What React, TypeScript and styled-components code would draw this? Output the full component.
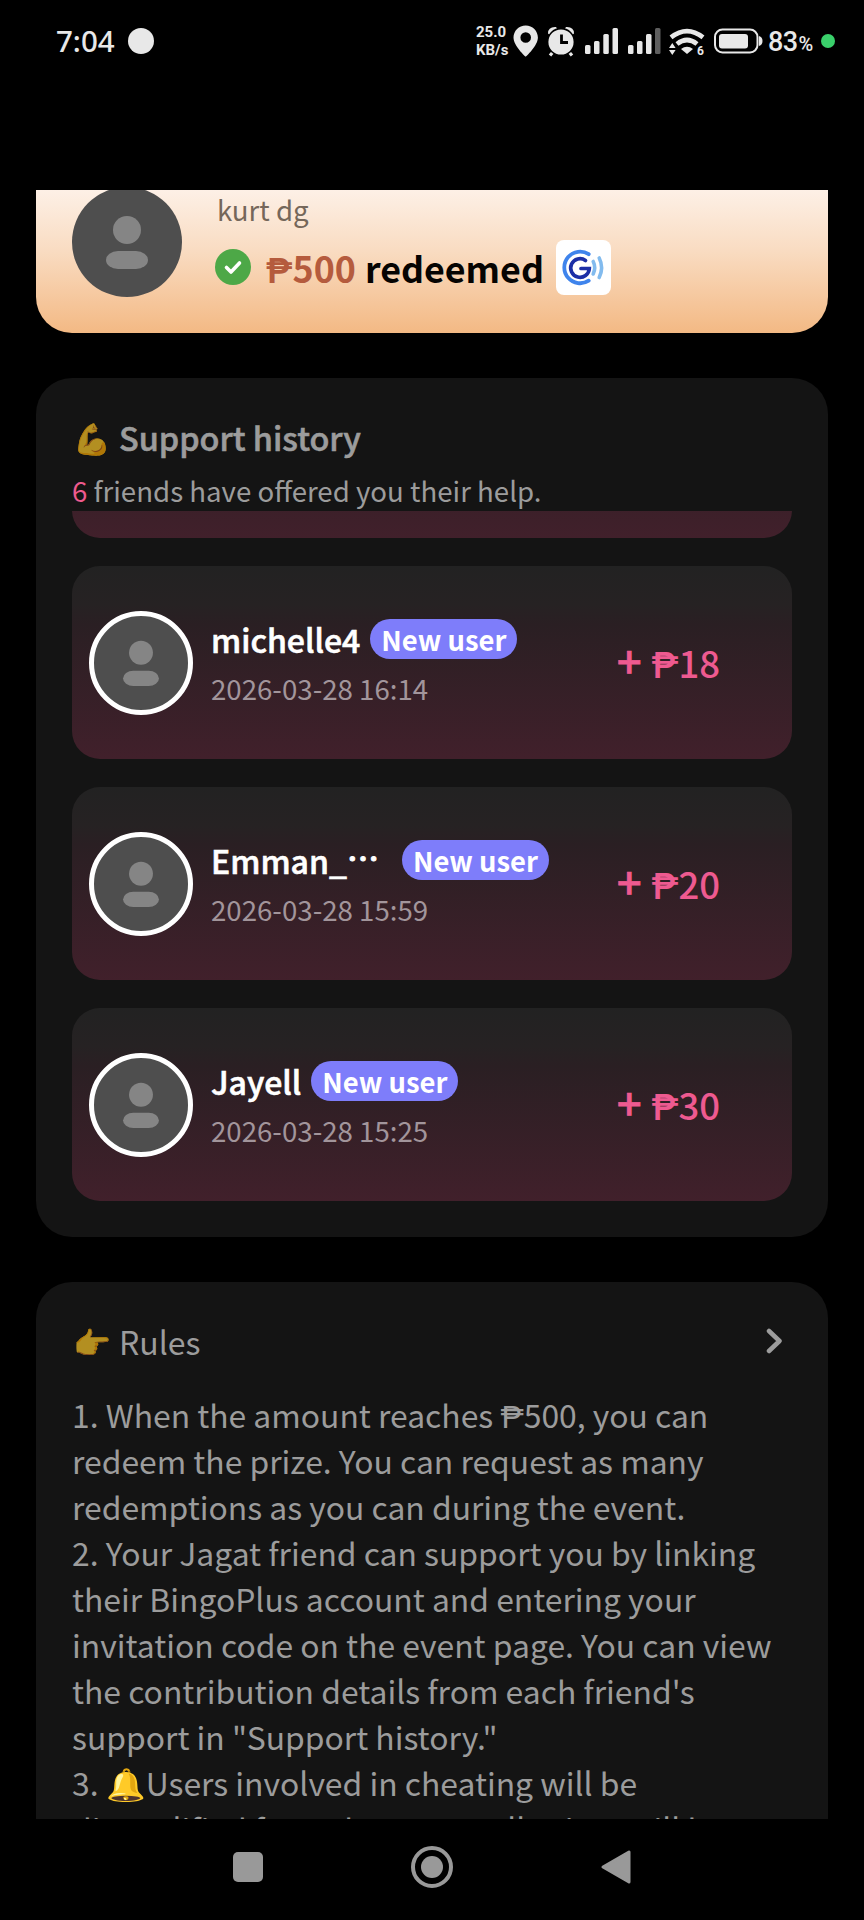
import React from "react";
import styled, { createGlobalStyle } from "styled-components";

const GlobalStyle = createGlobalStyle`
  * { box-sizing: border-box; }
  body { margin: 0; background: #000; }
`;

const Screen = styled.div`
  width: 864px;
  height: 1920px;
  display: flex;
  flex-direction: column;
  overflow: hidden;
  background: #000;
  font-family: "Noto Sans CJK SC", "Noto Sans", sans-serif;
`;

const StatusBar = styled.header`
  flex: none;
  height: 190px;
  padding: 0 29px 0 56px;
  display: flex;
  align-items: flex-start;
  justify-content: space-between;
  color: #e8e8e8;
`;

const StatusLeft = styled.div`
  height: 82px;
  display: flex;
  align-items: center;
  gap: 13px;
`;

const Clock = styled.span`
  font: 500 29.5px/40px "Noto Sans", sans-serif;
`;

const Dot = styled.span<{ $size: number; $color: string }>`
  width: ${(p) => p.$size}px;
  height: ${(p) => p.$size}px;
  border-radius: 50%;
  background: ${(p) => p.$color};
`;

const StatusRight = styled.div`
  height: 82px;
  display: flex;
  align-items: center;
`;

const NetSpeed = styled.div`
  width: 37px;
  margin-top: -1px;
  font: 700 15px/18px Roboto, sans-serif;
`;

const StatusIcons = styled.svg`
  display: block;
  width: 256px;
  height: 40px;
`;

const Battery = styled.div`
  width: 52px;
  margin-top: 3px;
  margin-left: -1px;
  margin-right: 1px;
  display: flex;
  align-items: baseline;
  gap: 1px;
  font: 500 27px/40px Roboto, sans-serif;
  letter-spacing: -0.6px;
  small {
    font-size: 20px;
  }
`;

const Viewport = styled.main`
  flex: none;
  height: 1629px;
  padding: 0 36px;
  overflow: hidden;
`;

const RedeemCard = styled.section`
  height: 143px;
  padding-left: 36px;
  display: flex;
  align-items: flex-start;
  overflow: hidden;
  border-radius: 0 0 36px 36px;
  background: linear-gradient(#fdf0e6, #f9dcc2 42%, #f3b984);
`;

const AvatarRing = styled.span<{ $size: number; $ring?: number; $lift?: number }>`
  flex: none;
  width: ${(p) => p.$size}px;
  height: ${(p) => p.$size}px;
  margin-top: ${(p) => p.$lift ?? 0}px;
  border: ${(p) => p.$ring ?? 0}px solid #fff;
  border-radius: 50%;
  background: #4e4e4e;
  display: flex;
  svg {
    width: 100%;
    height: 100%;
  }
`;

const RedeemBody = styled.div`
  margin-left: 33px;
  display: flex;
  flex-direction: column;
`;

const RedeemName = styled.div`
  margin-top: -1px;
  padding-left: 2px;
  font-size: 27.65px;
  line-height: 40px;
  color: #75675a;
`;

const RedeemLine = styled.div`
  height: 56px;
  margin-top: 10px;
  display: flex;
  align-items: center;
  font-size: 35.8px;
  font-weight: 700;
  line-height: 56px;
  color: #060402;
`;

const RedeemAmount = styled.span`
  margin: 0 9px 0 15px;
  color: #b55b3d;
`;

const PesoSign = styled.span<{ $weight?: number }>`
  font-family: Roboto, sans-serif;
  font-weight: ${(p) => p.$weight ?? 400};
  line-height: 1;
`;

const GcashTile = styled.span`
  width: 55px;
  height: 55px;
  margin-left: 12px;
  border-radius: 8px;
  background: #fff;
  display: flex;
`;

const Panel = styled.section<{ $height: number }>`
  height: ${(p) => p.$height}px;
  margin-top: 45px;
  padding: 0 36px;
  border-radius: 36px;
  background: #141414;
  color: #9c9c9c;
`;

const PanelTitle = styled.h2<{ $strong?: boolean; $top: number }>`
  margin: 0;
  padding-top: ${(p) => p.$top}px;
  display: flex;
  align-items: center;
  font-size: ${(p) => (p.$strong ? 32.4 : 32)}px;
  line-height: 46px;
  font-weight: ${(p) => (p.$strong ? 500 : 400)};
  -webkit-text-stroke: ${(p) => (p.$strong ? 0.6 : 0)}px currentColor;
`;

const Emoji = styled.span`
  width: 46px;
  margin-left: 1px;
  font-size: 30.5px;
  opacity: 0.68;
  -webkit-text-stroke: 0;
`;

const Chevron = styled.svg`
  width: 17px;
  height: 26px;
  margin-left: auto;
  margin-right: 9px;
`;

const Summary = styled.p`
  margin: 0;
  padding-top: 7px;
  font-size: 27.65px;
  line-height: 46px;
  b {
    font-weight: 400;
    color: #ee5a8e;
  }
`;

const HistoryList = styled.div`
  margin-top: -2px;
  height: 690px;
  display: flex;
  flex-direction: column;
  justify-content: flex-end;
  gap: 28px;
  overflow: hidden;
`;

const HistoryRow = styled.article`
  flex: none;
  height: 193px;
  padding: 0 72px 0 17px;
  display: flex;
  align-items: center;
  border-radius: 28px;
  background: linear-gradient(#222222, #262223 20%, #2a1f23 30%, #41202b);
`;

const Person = styled.div`
  margin-left: 18px;
  display: flex;
  flex-direction: column;
`;

const NameLine = styled.div`
  height: 46px;
  margin-top: -1px;
  display: flex;
  align-items: center;
  gap: 10px;
`;

const Name = styled.span`
  display: flex;
  font-size: 32px;
  font-weight: 500;
  line-height: 46px;
  color: #fff;
  -webkit-text-stroke: 0.6px #fff;
`;

const Ellipsis = styled.span`
  width: 32px;
  margin-right: 13px;
  font-size: 32px;
  line-height: 40px;
  text-align: center;
  -webkit-text-stroke: 1px #fff;
`;

const Tag = styled.span`
  width: 147px;
  height: 40px;
  border-radius: 20px;
  background: #7e7dfa;
  color: #fff;
  font-size: 27.4px;
  font-weight: 700;
  line-height: 40px;
  text-align: center;
`;

const Time = styled.time`
  font-size: 27.65px;
  line-height: 42px;
  margin-top: 5px;
  color: #a2959b;
`;

const Amount = styled.span`
  margin-left: auto;
  display: flex;
  align-items: center;
  gap: 10px;
  font-size: 36.5px;
  font-weight: 500;
  line-height: 50px;
  color: #ee5a90;
`;

const Plus = styled.span`
  font-size: 43px;
  line-height: 50px;
  margin-top: -8px;
  -webkit-text-stroke: 0.8px currentColor;
`;

const RulesText = styled.ol`
  margin: 0;
  padding: 27px 0 0;
  list-style: none;
  font-size: 31.87px;
  line-height: 46px;
  white-space: nowrap;
`;

const NavBar = styled.nav`
  flex: none;
  height: 101px;
  display: flex;
  justify-content: center;
  gap: 143px;
  svg {
    width: 42px;
    height: 42px;
    margin-top: 27px;
  }
`;

function Avatar(props: { size: number; ring?: number; lift?: number }) {
  return (
    <AvatarRing $size={props.size} $ring={props.ring} $lift={props.lift}>
      <svg viewBox="0 0 110 110">
        <circle cx="55" cy="43" r="14" fill="#858585" />
        <rect x="34" y="64" width="42" height="18" rx="12" ry="9" fill="#858585" />
      </svg>
    </AvatarRing>
  );
}

function StatusGlyphs() {
  return (
    <StatusIcons viewBox="513 21 256 40" fill="#e8e8e8">
      <path fillRule="evenodd" d="M525.7 25.5c-6.8 0-12.2 5.4-12.2 12.1 0 8.500 12.2 19.200 12.2 19.200s12.200-10.700 12.200-19.200c0-6.700-5.400-12.100-12.200-12.100zm0 6.700a5.300 5.300 0 1 1 0 10.600 5.300 5.300 0 0 1 0-10.600z" />
      <path d="M548 33.500q0-7 8-6.500l2 3-7 6zM574 33.500q0-7-8-6.500l-2 3 7 6z" />
      <path d="M553 52l-3 3.500M569 52l3 3.500" stroke="#e8e8e8" strokeWidth="3.200" fill="none" />
      <circle cx="561" cy="42" r="13.400" stroke="#000" strokeWidth="1.600" />
      <path d="M561.500 34.500v8h6.500" stroke="#000" strokeWidth="2.800" fill="none" />
      <rect x="585" y="45" width="5.500" height="9" rx="1.500" />
      <rect x="594" y="41" width="5.500" height="13" rx="1.500" />
      <rect x="603.300" y="34" width="5.500" height="20" rx="1.500" />
      <rect x="612.500" y="28" width="5.500" height="26" rx="1.500" />
      <rect x="628" y="45" width="5.500" height="9" rx="1.500" />
      <rect x="637" y="41" width="5.500" height="13" rx="1.500" />
      <rect x="646" y="34" width="5.500" height="20" rx="1.500" />
      <rect x="655" y="28" width="5.500" height="26" rx="1.500" fill="#5e5e5e" />
      <path d="M671 37.300q16-12.500 32 0M677 44q10-8 20 0" stroke="#e8e8e8" strokeWidth="4.700" fill="none" />
      <path d="M681 49q6-4.500 12 0l-6 5z" />
      <path d="M669 48l3.300-5 3.300 5zM669 50l3.300 5 3.300-5z" />
      <text x="697" y="54.500" fontFamily="Roboto" fontWeight="700" fontSize="12">6</text>
      <rect x="715" y="29.500" width="42.500" height="23" rx="7.500" fill="none" stroke="#e8e8e8" strokeWidth="2" />
      <rect x="719" y="34" width="29" height="14.500" rx="3" />
      <path d="M759 36q3.500 1 3.500 5t-3.500 5z" />
    </StatusIcons>
  );
}

const supporters = [
  { name: "michelle4", time: "2026-03-28 16:14", amount: 18 },
  { name: "Emman_", truncated: true, time: "2026-03-28 15:59", amount: 20 },
  { name: "Jayell", time: "2026-03-28 15:25", amount: 30 },
];

export default function App() {
  return (
    <Screen>
      <GlobalStyle />
      <StatusBar>
        <StatusLeft>
          <Clock>7:04</Clock>
          <Dot $size={26} $color="#e8e8e8" />
        </StatusLeft>
        <StatusRight>
          <NetSpeed>25.0 KB/s</NetSpeed>
          <StatusGlyphs />
          <Battery>
            83<small>%</small>
          </Battery>
          <Dot $size={14} $color="#3ad06b" />
        </StatusRight>
      </StatusBar>

      <Viewport>
        <RedeemCard>
          <Avatar size={110} lift={-3} />
          <RedeemBody>
            <RedeemName>kurt dg</RedeemName>
            <RedeemLine>
              <svg width="36" height="36" viewBox="0 0 36 36">
                <circle cx="18" cy="18" r="18" fill="#4da847" />
                <path d="M11.500 18.500l4.500 4.500 8.500-9" fill="none" stroke="#fff" strokeWidth="3.600" strokeLinecap="round" strokeLinejoin="round" />
              </svg>
              <RedeemAmount>
                <PesoSign $weight={600}>₱</PesoSign>500
              </RedeemAmount>
              redeemed
              <GcashTile>
                <svg width="55" height="55" viewBox="0 0 55 55" fill="none" strokeLinecap="round">
                  <path d="M32.700 14.200A15.800 15.800 0 1 0 32.700 40.700" stroke="#3f84ec" strokeWidth="3.800" />
                  <path d="M29.500 20.500A9.300 9.300 0 1 0 33.300 28.500H25" stroke="#1c2fa6" strokeWidth="3.700" />
                  <path d="M37.200 21.500q3 6 0 12.500M43.200 18q4.800 9.500 0 19.500" stroke="#82bbee" strokeWidth="3.600" />
                </svg>
              </GcashTile>
            </RedeemLine>
          </RedeemBody>
        </RedeemCard>

        <Panel $height={859}>
          <PanelTitle $strong $top={36}>
            <Emoji>💪</Emoji>
            Support history
          </PanelTitle>
          <Summary>
            <b>6</b> friends have offered you their help.
          </Summary>
          <HistoryList>
            <HistoryRow />
            {supporters.map((s) => (
              <HistoryRow key={s.name}>
                <Avatar size={104} ring={5} />
                <Person>
                  <NameLine>
                    <Name>
                      {s.name}
                      {s.truncated && <Ellipsis>…</Ellipsis>}
                    </Name>
                    <Tag>New user</Tag>
                  </NameLine>
                  <Time>{s.time}</Time>
                </Person>
                <Amount>
                  <Plus>+</Plus>
                  <span>
                    <PesoSign $weight={500}>₱</PesoSign>
                    {s.amount}
                  </span>
                </Amount>
              </HistoryRow>
            ))}
          </HistoryList>
        </Panel>

        <Panel $height={700}>
          <PanelTitle $top={36}>
            <Emoji>👉</Emoji>
            Rules
            <Chevron viewBox="0 0 17 26">
              <path d="M3 3l10.500 10L3 23" fill="none" stroke="#9c9c9c" strokeWidth="4.500" strokeLinecap="round" strokeLinejoin="round" />
            </Chevron>
          </PanelTitle>
          <RulesText>
            <li>
              1. When the amount reaches <PesoSign>₱</PesoSign>500, you can
              <br />
              redeem the prize. You can request as many
              <br />
              redemptions as you can during the event.
            </li>
            <li>
              2. Your Jagat friend can support you by linking
              <br />
              their BingoPlus account and entering your
              <br />
              invitation code on the event page. You can view
              <br />
              the contribution details from each friend's
              <br />
              support in "Support history."
            </li>
            <li>
              3. 🔔Users involved in cheating will be
              <br />
              disqualified from the event. All prizes will be
            </li>
          </RulesText>
        </Panel>
      </Viewport>

      <NavBar>
        <svg viewBox="0 0 42 42" fill="#999">
          <rect x="7" y="6" width="30" height="30" rx="5" />
        </svg>
        <svg viewBox="0 0 42 42" fill="#999">
          <circle cx="21" cy="21" r="19" fill="none" stroke="#999" strokeWidth="4" />
          <circle cx="21" cy="21" r="11" />
        </svg>
        <svg viewBox="0 0 42 42" fill="#999">
          <path d="M33 6v30L7 21z" stroke="#999" strokeWidth="3" strokeLinejoin="round" />
        </svg>
      </NavBar>
    </Screen>
  );
}
